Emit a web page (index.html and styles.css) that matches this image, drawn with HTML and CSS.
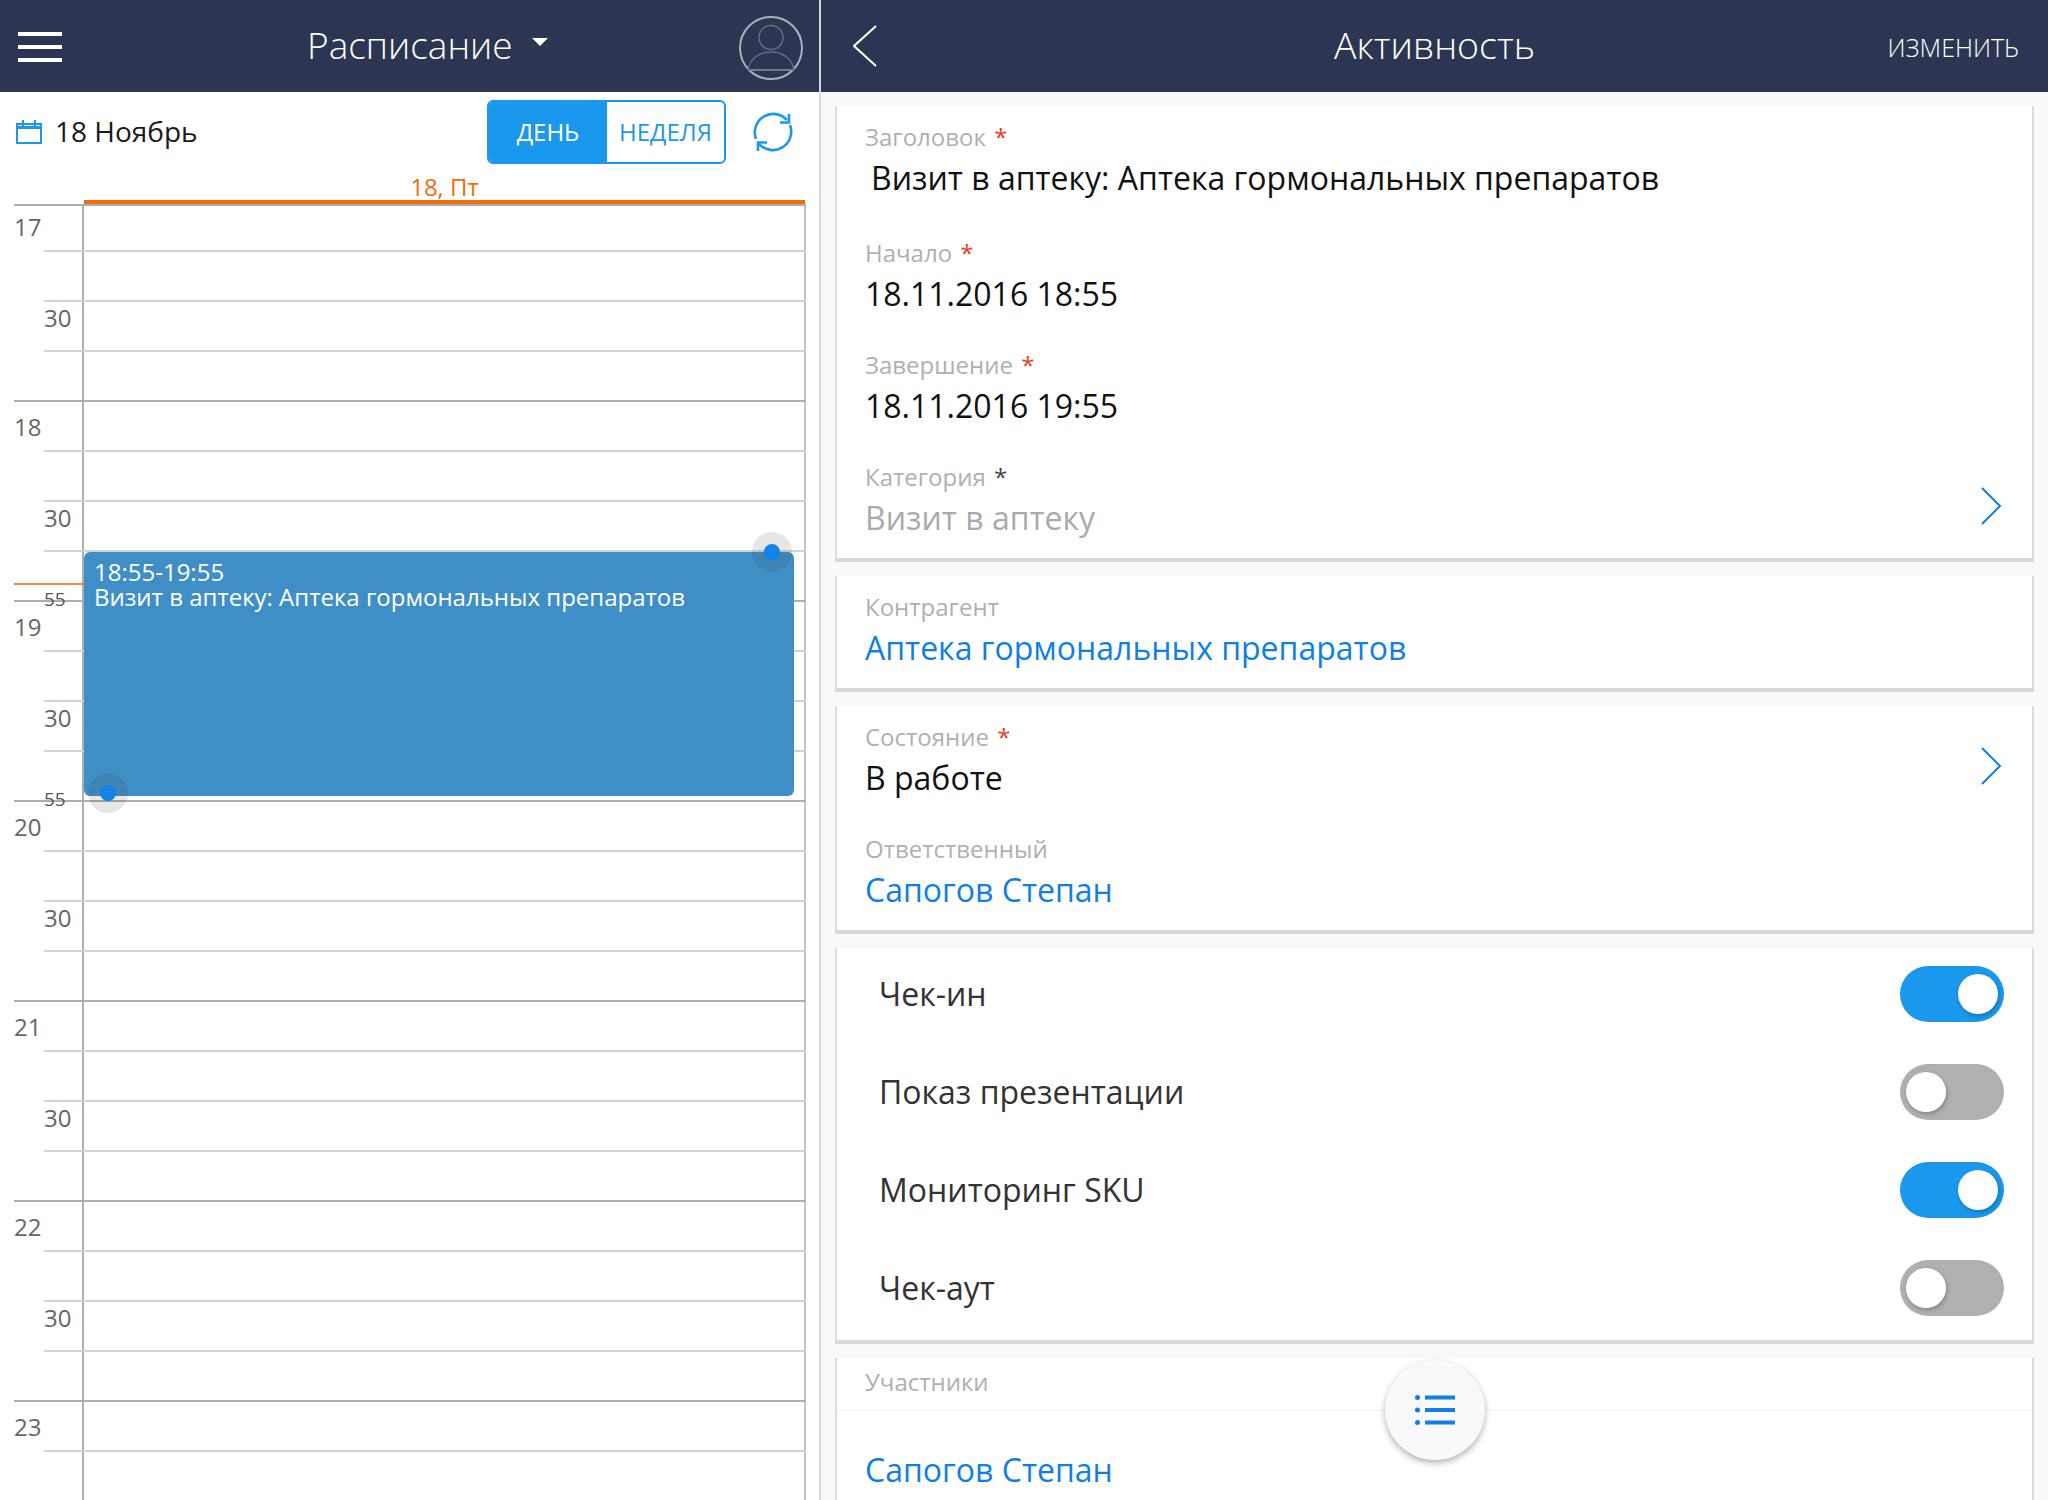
FILE: index.html
```html
<!DOCTYPE html>
<html>
	<head>
		<meta charset="utf-8" />
		<title>Расписание</title>
		<link rel="stylesheet" href="styles.css">
	</head>
	<body>
		<div class="app">
			<!-- расписание -->
			<div class="left">
				<div class="bar">
					<svg class="burger" width="44" height="30" viewBox="0 0 44 30"><path d="M0 2h44M0 15h44M0 28h44" stroke="#fff" stroke-width="4"/></svg>
					<span class="bar-title title-left">Расписание</span>
					<span class="caret"></span>
					<svg class="avatar" width="64" height="64" viewBox="0 0 64 64" fill="none">
						<circle cx="32" cy="32" r="31" stroke="#aeb0b5" stroke-width="2"/>
						<circle cx="32" cy="21.500" r="12" stroke="#666c7e" stroke-width="1.500"/>
						<path d="M9 54c2-12 12-18 23-18s21 6 23 18" stroke="#666c7e" stroke-width="1.500"/>
						<path d="M9 54h46" stroke="#767b89" stroke-width="2"/>
					</svg>
				</div>
				<div class="tools">
					<svg class="cal-icon" width="26" height="24" viewBox="0 0 26 24" fill="none" stroke="#1a98ee" stroke-width="2"><rect x="1" y="4" width="24" height="19"/><path d="M1 7.500h24" stroke-width="3"/><path d="M7 0v6M19 0v6"/></svg>
					<span class="date">18 Ноябрь</span>
					<div class="seg">
						<span class="seg-item active">ДЕНЬ</span>
						<span class="seg-item">НЕДЕЛЯ</span>
					</div>
					<svg class="refresh" width="40" height="40" viewBox="0 0 40 40" fill="none" stroke="#1a98ee" stroke-width="2.600">
						<path d="M3 27A18.500 18.500 0 0 1 34 8"/>
						<path d="M36 2v8.500h-9"/>
						<path d="M37 13A18.500 18.500 0 0 1 6 32"/>
						<path d="M5 39v-8.500h9"/>
					</svg>
				</div>
				<div class="day-head">18, Пт</div>
				<div class="cal">
					<div class="slot hour first"><span class="slot-time">17</span><span class="slot-day"></span></div>
					<div class="slot"><span class="slot-time"></span><span class="slot-day"></span></div>
					<div class="slot"><span class="slot-time">30</span><span class="slot-day"></span></div>
					<div class="slot"><span class="slot-time"></span><span class="slot-day"></span></div>
					<div class="slot hour"><span class="slot-time">18</span><span class="slot-day"></span></div>
					<div class="slot"><span class="slot-time"></span><span class="slot-day"></span></div>
					<div class="slot"><span class="slot-time">30</span><span class="slot-day"></span></div>
					<div class="slot"><span class="slot-time"></span><span class="slot-day"></span></div>
					<div class="slot hour"><span class="slot-time">19</span><span class="slot-day"></span></div>
					<div class="slot"><span class="slot-time"></span><span class="slot-day"></span></div>
					<div class="slot"><span class="slot-time">30</span><span class="slot-day"></span></div>
					<div class="slot"><span class="slot-time"></span><span class="slot-day"></span></div>
					<div class="slot hour"><span class="slot-time">20</span><span class="slot-day"></span></div>
					<div class="slot"><span class="slot-time"></span><span class="slot-day"></span></div>
					<div class="slot"><span class="slot-time">30</span><span class="slot-day"></span></div>
					<div class="slot"><span class="slot-time"></span><span class="slot-day"></span></div>
					<div class="slot hour"><span class="slot-time">21</span><span class="slot-day"></span></div>
					<div class="slot"><span class="slot-time"></span><span class="slot-day"></span></div>
					<div class="slot"><span class="slot-time">30</span><span class="slot-day"></span></div>
					<div class="slot"><span class="slot-time"></span><span class="slot-day"></span></div>
					<div class="slot hour"><span class="slot-time">22</span><span class="slot-day"></span></div>
					<div class="slot"><span class="slot-time"></span><span class="slot-day"></span></div>
					<div class="slot"><span class="slot-time">30</span><span class="slot-day"></span></div>
					<div class="slot"><span class="slot-time"></span><span class="slot-day"></span></div>
					<div class="slot hour"><span class="slot-time">23</span><span class="slot-day"></span></div>
					<div class="slot"><span class="slot-time"></span><span class="slot-day"></span></div>

					<div class="now-line"></div>
					<span class="mark mark-start">55</span>
					<span class="mark mark-end">55</span>
					<div class="event">18:55-19:55<br>Визит в аптеку: Аптека гормональных препаратов</div>
					<span class="handle handle-top"></span>
					<span class="handle handle-bottom"></span>
				</div>
			</div>

			<!-- активность -->
			<div class="right">
				<div class="bar bar-right">
					<svg class="back" width="24" height="42" viewBox="0 0 24 42" fill="none" stroke="#fff" stroke-width="2"><path d="M23 1L1 21l22 20"/></svg>
					<span class="bar-title">Активность</span>
					<span class="edit">ИЗМЕНИТЬ</span>
				</div>
				<div class="cards">
					<div class="card">
						<div class="field field-title">
							<div class="label">Заголовок <i class="star">*</i></div>
							<div class="value indent">Визит в аптеку: Аптека гормональных препаратов</div>
						</div>
						<div class="field">
							<div class="label">Начало <i class="star">*</i></div>
							<div class="value">18.11.2016 18:55</div>
						</div>
						<div class="field">
							<div class="label">Завершение <i class="star">*</i></div>
							<div class="value">18.11.2016 19:55</div>
						</div>
						<div class="field field-link">
							<div>
								<div class="label">Категория <i class="star dark">*</i></div>
								<div class="value muted">Визит в аптеку</div>
							</div>
							<svg class="chevron" width="22" height="38" viewBox="0 0 22 38" fill="none" stroke="#0f7fe6" stroke-width="2"><path d="M2 1l18 18L2 37"/></svg>
						</div>
					</div>
					<div class="card">
						<div class="field">
							<div class="label">Контрагент</div>
							<div class="value link">Аптека гормональных препаратов</div>
						</div>
					</div>
					<div class="card">
						<div class="field field-link">
							<div>
								<div class="label">Состояние <i class="star">*</i></div>
								<div class="value">В работе</div>
							</div>
							<svg class="chevron" width="22" height="38" viewBox="0 0 22 38" fill="none" stroke="#0f7fe6" stroke-width="2"><path d="M2 1l18 18L2 37"/></svg>
						</div>
						<div class="field">
							<div class="label">Ответственный</div>
							<div class="value link">Сапогов Степан</div>
						</div>
					</div>
					<div class="card card-switches">
						<div class="switch-row"><span class="switch-name">Чек-ин</span><span class="switch on"></span></div>
						<div class="switch-row"><span class="switch-name">Показ презентации</span><span class="switch"></span></div>
						<div class="switch-row"><span class="switch-name">Мониторинг SKU</span><span class="switch on"></span></div>
						<div class="switch-row"><span class="switch-name">Чек-аут</span><span class="switch"></span></div>
					</div>
					<div class="card card-people">
						<div class="people-head"><div class="label">Участники</div></div>
						<div class="value link">Сапогов Степан</div>
					</div>
				</div>
				<div class="fab">
					<svg width="40" height="30" viewBox="0 0 40 30" fill="#0f7fe6"><circle cx="2.500" cy="2.500" r="2.500"/><circle cx="2.500" cy="15" r="2.500"/><circle cx="2.500" cy="27.500" r="2.500"/><rect x="10" y="0.500" width="30" height="4"/><rect x="10" y="13" width="30" height="4"/><rect x="10" y="25.500" width="30" height="4"/></svg>
				</div>
			</div>
		</div>
	</body>
</html>
```

FILE: styles.css
```css
* {
	padding: 0;
	margin: 0;
	box-sizing: border-box;
}

body {
	background-color: #fff;
	font-family: "Open Sans", "Noto Sans", sans-serif;
	color: #1a1a1a;
	overflow: hidden;
}

.app {
	display: flex;
	width: 2048px;
	height: 1500px;
	overflow: hidden;
}

.left {
	width: 819px;
	flex: none;
	background-color: #fff;
}

.right {
	flex: 1;
	position: relative;
	border-left: 2px solid #d8d8d8;
	background-color: #f9f9f9;
}

/* шапка */
.bar {
	display: flex;
	align-items: center;
	height: 92px;
	padding: 0 16px 0 18px;
	background-color: #2c3653;
	color: #fff;
}

.bar-title {
	padding-bottom: 4px;
	font-size: 37.500px;
	font-weight: 300;
}

.title-left {
	font-size: 37px;
}

.burger {
	margin: 2px 245px 0 0;
}

.caret {
	margin: 0 0 8px 19px;
	border-left: 8.500px solid transparent;
	border-right: 8.500px solid transparent;
	border-top: 8px solid #fff;
}

.avatar {
	margin: 3px 0 0 auto;
}

.bar-right {
	padding: 0 29px 0 32px;
}

.back {
	margin-right: 457px;
}

.edit {
	margin: 2px 0 0 auto;
	font-size: 25px;
	font-weight: 300;
}

/* панель инструментов */
.tools {
	display: flex;
	align-items: center;
	height: 80px;
	padding: 0 26px 0 16px;
}

.date {
	margin-left: 13px;
	padding-bottom: 2px;
	font-size: 28px;
}

.seg {
	display: flex;
	margin-left: auto;
	width: 239px;
	height: 64px;
	border: 2px solid #1a98ee;
	border-radius: 6px;
	overflow: hidden;
	font-size: 24px;
	color: #1a98ee;
}

.seg-item {
	flex: 1;
	display: flex;
	align-items: center;
	justify-content: center;
	padding-bottom: 2px;
}

.seg-item.active {
	flex: none;
	width: 118px;
	background-color: #1a98ee;
	color: #fff;
}

.refresh {
	margin-left: 27px;
}

/* календарь */
.day-head {
	height: 32px;
	width: 721px;
	margin-left: 84px;
	border-bottom: 4px solid #f26c0a;
	font-size: 24px;
	line-height: 30px;
	text-align: center;
	color: #f26c0a;
}

.cal {
	position: relative;
	width: 806px;
}

.slot {
	display: flex;
	height: 50px;
	margin-left: 44px;
	border-top: 2px solid #d3d3d3;
}

.slot.hour {
	margin-left: 14px;
	border-top-color: #adadad;
}

.slot.first {
	height: 46px;
}

.slot-time {
	width: 38px;
	flex: none;
	padding-top: 1px;
	font-size: 24px;
	line-height: 30px;
	color: #666;
}

.slot.hour .slot-time {
	width: 68px;
	padding-top: 10px;
}

.slot.first .slot-time {
	padding-top: 6px;
}

.slot-day {
	flex: 1;
	border-left: 2px solid #adadad;
	border-right: 2px solid #c4c4c4;
}

.now-line {
	position: absolute;
	left: 14px;
	top: 379px;
	width: 70px;
	height: 2px;
	background-color: #f08a45;
}

.mark {
	position: absolute;
	left: 44px;
	font-size: 19px;
	line-height: 30px;
	color: #555;
}

.mark-start {
	top: 380px;
}

.mark-end {
	top: 580px;
}

.event {
	position: absolute;
	left: 84px;
	top: 348px;
	width: 710px;
	height: 244px;
	padding: 8px 10px;
	border-radius: 6px;
	background-color: #3f8fc6;
	color: #fff;
	font-size: 24px;
	line-height: 24.500px;
}

.handle {
	position: absolute;
	width: 40px;
	height: 40px;
	border-radius: 50%;
	background-color: rgba(60, 60, 60, 0.12);
}

.handle::after {
	content: "";
	position: absolute;
	left: 12px;
	top: 12px;
	width: 16px;
	height: 16px;
	border-radius: 50%;
	background-color: #1283e8;
}

.handle-top {
	left: 752px;
	top: 328px;
}

.handle-bottom {
	left: 88px;
	top: 569px;
}

/* карточки */
.cards {
	display: flex;
	flex-direction: column;
	gap: 14px;
	padding: 14px 14px 0;
}

.card {
	padding: 16px 0 14px 28px;
	background-color: #fff;
	border-left: 2px solid #dcdcdc;
	border-right: 2px solid #dcdcdc;
	border-bottom: 4px solid #d8d8d8;
}

.field {
	margin-top: 30px;
	padding-right: 30px;
}

.field:first-child {
	margin-top: 0;
}

.field-title {
	margin-bottom: 34px;
}

.field-link {
	display: flex;
	align-items: center;
	justify-content: space-between;
}

.chevron {
	margin-top: 5px;
}

.label {
	font-size: 24px;
	line-height: 30px;
	color: #b0b0b0;
}

.star {
	margin-left: 2px;
	font-style: normal;
	color: #f03a17;
}

.star.dark {
	color: #444;
}

.value {
	font-size: 32px;
	line-height: 52px;
	color: #111;
}

.value.indent {
	padding-left: 6px;
}

.value.muted {
	color: #aaa;
}

.value.link {
	color: #0f7fe6;
}

.card-switches {
	display: flex;
	flex-direction: column;
	gap: 6px;
	padding: 0 0 6px 42px;
}

.switch-row {
	display: flex;
	align-items: center;
	justify-content: space-between;
	height: 92px;
	padding-right: 28px;
	font-size: 32px;
	color: #333;
}

.switch-name {
	padding-bottom: 2px;
}

.switch {
	position: relative;
	width: 104px;
	height: 56px;
	border-radius: 28px;
	background-color: #b0b0b0;
}

.switch::after {
	content: "";
	position: absolute;
	left: 6px;
	top: 8px;
	width: 40px;
	height: 40px;
	border-radius: 50%;
	background-color: #fff;
	box-shadow: 1px 2px 4px rgba(0, 0, 0, 0.25);
}

.switch.on {
	background-color: #1a98ee;
}

.switch.on::after {
	left: 58px;
}

.card-people {
	padding: 9px 0 20px;
	border-bottom: 0;
}

.people-head {
	padding: 0 0 12px 28px;
	border-bottom: 2px solid #f7f7f7;
}

.card-people .value {
	margin: 33px 0 0 28px;
}

.fab {
	position: absolute;
	left: 564px;
	top: 1360px;
	display: flex;
	align-items: center;
	justify-content: center;
	width: 100px;
	height: 100px;
	border-radius: 50%;
	background-color: #f9f9f9;
	box-shadow: 0 3px 6px rgba(0, 0, 0, 0.3);
}
```
